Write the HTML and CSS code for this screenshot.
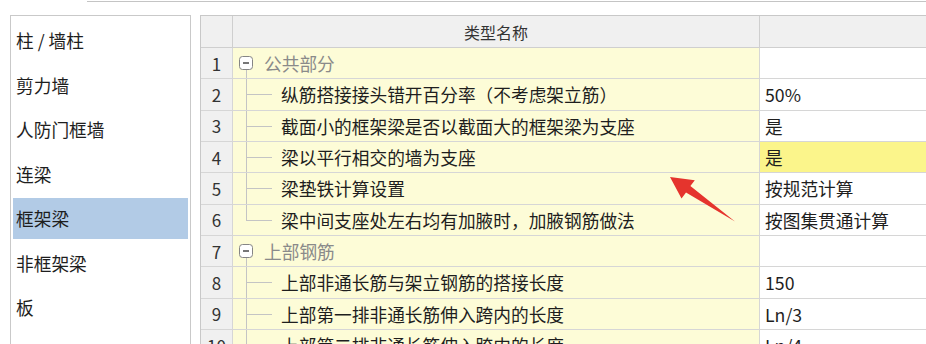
FILE: index.html
```html
<!DOCTYPE html>
<html lang="zh-CN">
<head>
    <meta charset="UTF-8">
    <title>计算设置 - 框架梁</title>
    <link rel="stylesheet" href="styles.css">
</head>
<body>
    <div class="topbar"></div>

    <div class="page">
        <ul class="side">
            <li>柱 / 墙柱</li>
            <li>剪力墙</li>
            <li>人防门框墙</li>
            <li>连梁</li>
            <li class="active">框架梁</li>
            <li>非框架梁</li>
            <li>板</li>
        </ul>

        <div class="grid">
            <div class="head num"></div>
            <div class="head">类型名称</div>
            <div class="head"></div>

            <div class="num">1</div>
            <div class="name group"><svg class="toggle" width="14" height="14" viewBox="0 0 14 14"><rect x="0.5" y="0.5" width="13" height="13" rx="3" fill="#fff" stroke="#858585"/><path d="M4 7h6" stroke="#4a4a4a" stroke-width="1.5"/></svg>公共部分</div>
            <div class="val"></div>

            <div class="num">2</div>
            <div class="name child">纵筋搭接接头错开百分率（不考虑架立筋）</div>
            <div class="val">50%</div>

            <div class="num">3</div>
            <div class="name child">截面小的框架梁是否以截面大的框架梁为支座</div>
            <div class="val">是</div>

            <div class="num">4</div>
            <div class="name child">梁以平行相交的墙为支座</div>
            <div class="val selected">是</div>

            <div class="num">5</div>
            <div class="name child">梁垫铁计算设置</div>
            <div class="val">按规范计算</div>

            <div class="num">6</div>
            <div class="name child last">梁中间支座处左右均有加腋时，加腋钢筋做法</div>
            <div class="val">按图集贯通计算</div>

            <div class="num">7</div>
            <div class="name group"><svg class="toggle" width="14" height="14" viewBox="0 0 14 14"><rect x="0.5" y="0.5" width="13" height="13" rx="3" fill="#fff" stroke="#858585"/><path d="M4 7h6" stroke="#4a4a4a" stroke-width="1.5"/></svg>上部钢筋</div>
            <div class="val"></div>

            <div class="num">8</div>
            <div class="name child">上部非通长筋与架立钢筋的搭接长度</div>
            <div class="val">150</div>

            <div class="num">9</div>
            <div class="name child">上部第一排非通长筋伸入跨内的长度</div>
            <div class="val">Ln/3</div>

            <div class="num">10</div>
            <div class="name child">上部第二排非通长筋伸入跨内的长度</div>
            <div class="val">Ln/4</div>
        </div>
    </div>

    <!-- annotation arrow drawn over the grid -->
    <svg class="arrow" width="926" height="344" viewBox="0 0 926 344">
        <polygon points="670,177 681.5,198.6 686,192.6 735,221.5 690.4,186 694.8,180.3" fill="#e5342d"/>
    </svg>
</body>
</html>
```

FILE: styles.css
```css
:root {
    --line: #d6d6d6;
    --head-bg: #f0f0f0;
    --name-bg: #fdfcd7;
    --pick-bg: #fbf58b;
    --side-pick: #b2cbe6;
    --text: #1e1e1e;
    --muted: #8a8a8a;
}

* {
    margin: 0;
    padding: 0;
    box-sizing: border-box;
}

body {
    font-family: "Noto Sans CJK SC", "Noto Sans", sans-serif;
    background: #fff;
    color: var(--text);
    overflow: hidden;
    height: 344px;
    position: relative;
}

.topbar {
    height: 2px;
    margin-left: 87px;
    border-bottom: 1px solid #c4c4c4;
}

.page {
    display: flex;
    gap: 9px;
    padding-left: 10px;
    margin-top: 13px;
}

.side {
    list-style: none;
    width: 181px;
    height: 400px;
    flex-shrink: 0;
    border: 1px solid #c9c9c9;
    padding: 4px 2px 0;
    display: flex;
    flex-direction: column;
    gap: 3.5px;
}

.side li {
    height: 41px;
    line-height: 41px;
    padding-left: 3px;
    font-size: 17.7px;
}

.side li.active {
    background: var(--side-pick);
}

.grid {
    display: grid;
    grid-template-columns: 32px 527px 320px;
    grid-template-rows: 32px;
    grid-auto-rows: 31.33px;
    border-left: 1px solid #c8c8c8;
    border-top: 1px solid #c8c8c8;
    flex-shrink: 0;
}

.grid > div {
    border-right: 1px solid var(--line);
    border-bottom: 1px solid var(--line);
    display: flex;
    align-items: center;
    font-size: 17.7px;
    white-space: nowrap;
    overflow: hidden;
}

.grid .head {
    background: var(--head-bg);
    justify-content: center;
    font-size: 16px;
    color: #333;
    border-color: #cfcfcf;
}

.grid .num {
    background: var(--head-bg);
    justify-content: center;
    font-size: 17px;
    color: #333;
}

.name {
    background: var(--name-bg);
    position: relative;
}

.name.group {
    padding-left: 6px;
    color: var(--muted);
}

.toggle {
    margin-right: 11px;
    flex-shrink: 0;
}

.name.group::after {
    content: "";
    position: absolute;
    left: 13px;
    top: calc(50% + 7px);
    bottom: 0;
    border-left: 1px solid #c4c4c4;
}

.name.child {
    padding-left: 48px;
}

.name.child::before {
    content: "";
    position: absolute;
    left: 13px;
    top: 0;
    bottom: 0;
    border-left: 1px solid #c4c4c4;
}

.name.child.last::before {
    bottom: 50%;
}

.name.child::after {
    content: "";
    position: absolute;
    left: 13px;
    width: 26px;
    top: 50%;
    border-top: 1px solid #c4c4c4;
}

.val {
    padding-left: 5px;
    background: #fff;
}

.val.selected {
    background: var(--pick-bg);
}

.arrow {
    position: absolute;
    left: 0;
    top: 0;
    pointer-events: none;
}
```
